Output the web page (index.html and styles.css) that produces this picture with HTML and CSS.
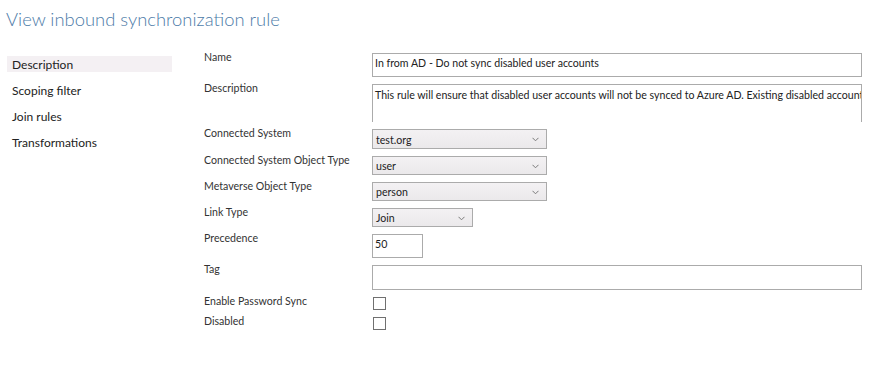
FILE: index.html
```html
<!DOCTYPE html>
<html lang="en">
<head>
    <meta charset="UTF-8">
    <title>View inbound synchronization rule</title>
    <link rel="stylesheet" href="styles.css">
</head>
<body>
<h1 class="page-title">View inbound synchronization rule</h1>
<div class="main">
    <ul class="side-nav">
        <li class="active">Description</li>
        <li>Scoping filter</li>
        <li>Join rules</li>
        <li>Transformations</li>
    </ul>
    <div class="rule-form">
        <div class="label">Name</div>
        <div class="field text-box name-box">In from AD - Do not sync disabled user accounts</div>

        <div class="label">Description</div>
        <div class="field text-box desc-box">This rule will ensure that disabled user accounts will not be synced to Azure AD. Existing disabled accounts</div>

        <div class="label">Connected System</div>
        <div class="field drop first-drop"><span>test.org</span><svg width="7" height="5" viewBox="0 0 7 5"><path d="M0.5 0.8 L3.5 3.8 L6.5 0.8" fill="none" stroke="#7a7a7a" stroke-width="1"/></svg></div>

        <div class="label">Connected System Object Type</div>
        <div class="field drop"><span>user</span><svg width="7" height="5" viewBox="0 0 7 5"><path d="M0.5 0.8 L3.5 3.8 L6.5 0.8" fill="none" stroke="#7a7a7a" stroke-width="1"/></svg></div>

        <div class="label">Metaverse Object Type</div>
        <div class="field drop"><span>person</span><svg width="7" height="5" viewBox="0 0 7 5"><path d="M0.5 0.8 L3.5 3.8 L6.5 0.8" fill="none" stroke="#7a7a7a" stroke-width="1"/></svg></div>

        <div class="label">Link Type</div>
        <div class="field drop small-drop"><span>Join</span><svg width="7" height="5" viewBox="0 0 7 5"><path d="M0.5 0.8 L3.5 3.8 L6.5 0.8" fill="none" stroke="#7a7a7a" stroke-width="1"/></svg></div>

        <div class="label">Precedence</div>
        <div class="field text-box prec-box">50</div>

        <div class="label">Tag</div>
        <div class="field text-box tag-box"></div>

        <div class="label">Enable Password Sync</div>
        <div class="field check-box"></div>

        <div class="label">Disabled</div>
        <div class="field check-box"></div>
    </div>
</div>
</body>
</html>
```

FILE: styles.css
```css
* {
    box-sizing: border-box;
}

body {
    margin: 0;
    background-color: #ffffff;
    font-family: Lato, "Open Sans", sans-serif;
    color: #2b2b2b;
}

.page-title {
    margin: 0;
    padding: 6px 0 0 6px;
    height: 32px;
    font-size: 18.4px;
    line-height: 26px;
    font-weight: 300;
    color: #4d7ba8;
}

.main {
    display: flex;
    align-items: flex-start;
    margin-top: 21px;
}

.side-nav {
    list-style: none;
    margin: 3px 0 0 7px;
    padding: 0;
    width: 165px;
}

.side-nav li {
    height: 16px;
    line-height: 17px;
    padding-left: 5px;
    margin-bottom: 10px;
    font-size: 12px;
    color: #222222;
}

.side-nav li.active {
    background-color: #f4f0f3;
}

.rule-form {
    display: grid;
    grid-template-columns: 168px 490px;
    row-gap: 7px;
    margin-left: 32px;
    font-size: 10.6px;
}

.label {
    margin-top: -2px;
    line-height: 12px;
    color: #333333;
    white-space: nowrap;
}

.field {
    border: 1px solid #ababab;
    background-color: #ffffff;
    color: #222222;
}

.text-box {
    padding: 2px 0 0 2px;
    line-height: 14px;
    overflow: hidden;
    white-space: nowrap;
}

.name-box {
    height: 24px;
}

.desc-box {
    height: 38px;
    padding-top: 3px;
    border-bottom: none;
}

.prec-box {
    width: 51px;
    height: 24px;
}

.tag-box {
    height: 25px;
}

.drop {
    display: flex;
    align-items: center;
    justify-content: space-between;
    width: 175px;
    height: 19px;
    padding: 1px 7px 0 3px;
    background: linear-gradient(#f3f1f3, #ebe9eb);
}

.first-drop {
    height: 20px;
}

.small-drop {
    width: 101px;
}

.check-box {
    width: 13px;
    height: 13px;
    margin-left: 1px;
    border-color: #707070;
}
```
